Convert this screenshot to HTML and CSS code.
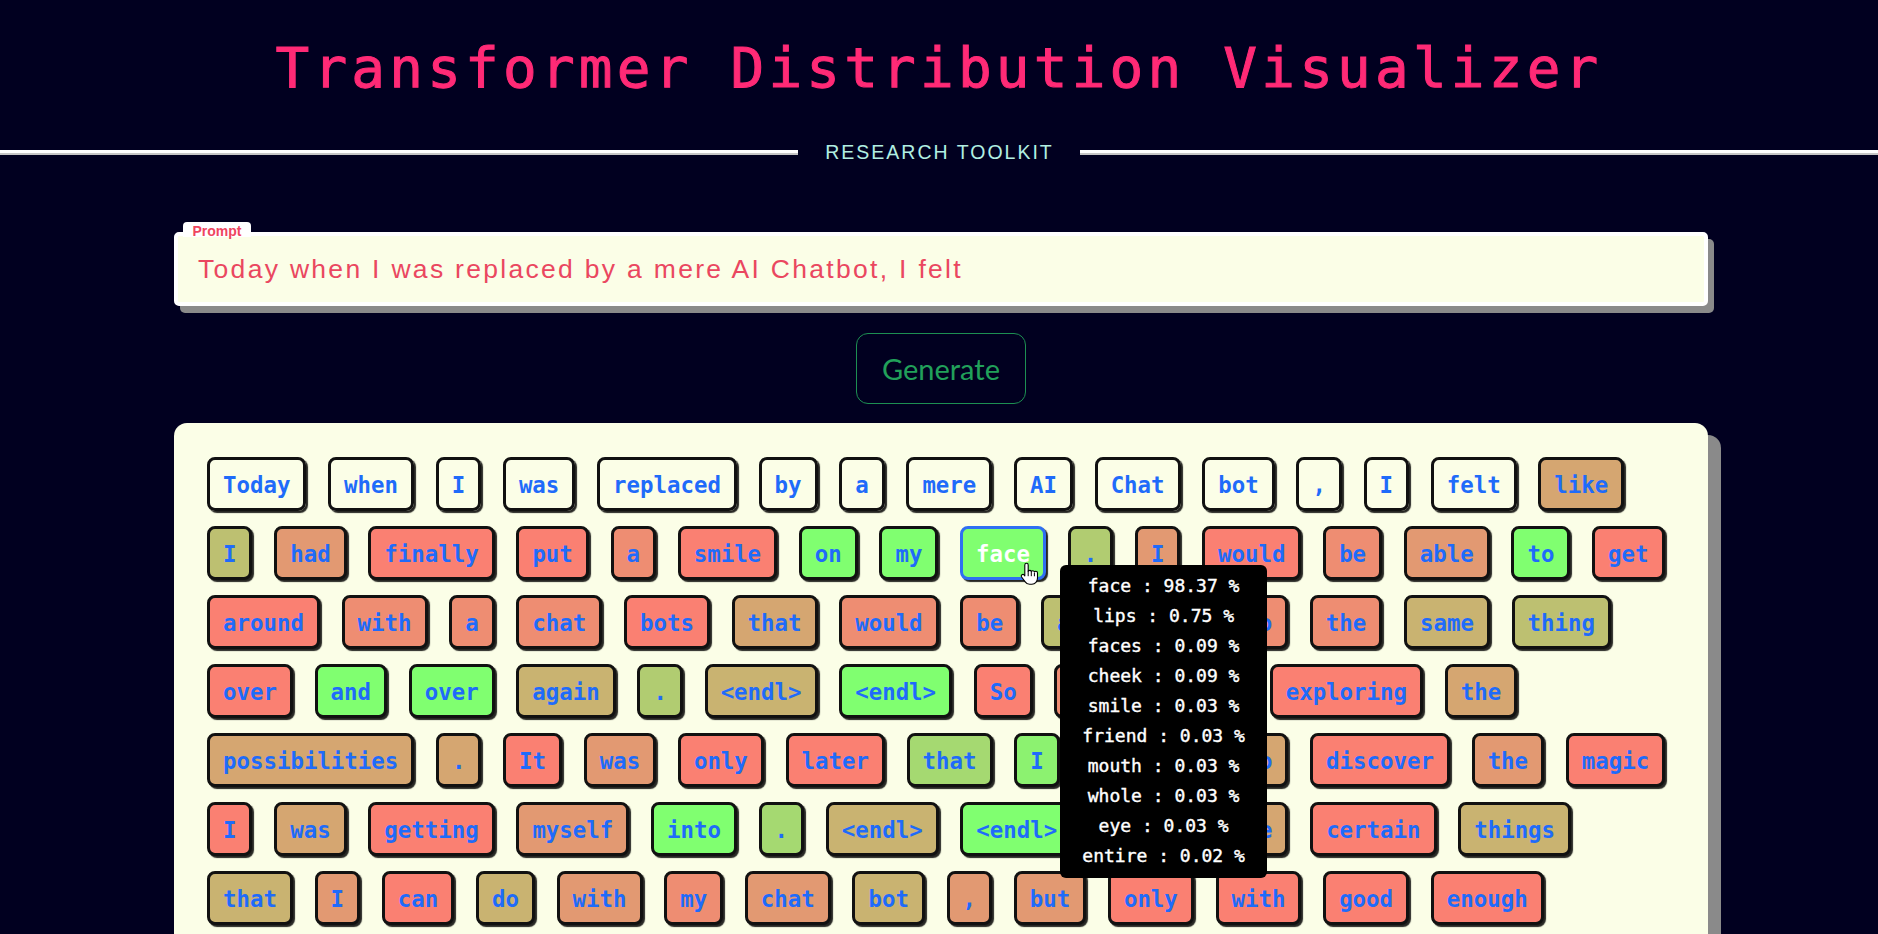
FILE: index.html
```html
<!DOCTYPE html>
<html lang="en">
<head>
<meta charset="utf-8">
<title>Transformer Distribution Visualizer</title>
<link rel="stylesheet" href="styles.css">
</head>
<body>
<header class="header">
  <h1 class="title">Transformer Distribution Visualizer</h1>
  <div class="divider">
    <span class="rule"></span>
    <span class="subtitle">RESEARCH TOOLKIT</span>
    <span class="rule"></span>
  </div>
</header>
<main class="main">
  <div class="prompt">
    <span class="prompt-label">Prompt</span>
    <div class="prompt-text">Today when I was replaced by a mere AI Chatbot, I felt</div>
  </div>
  <div class="actions">
    <button class="generate" type="button">Generate</button>
  </div>
  <section class="tokens">
    <span class="tok pr">Today</span>
    <span class="tok pr">when</span>
    <span class="tok pr">I</span>
    <span class="tok pr">was</span>
    <span class="tok pr">replaced</span>
    <span class="tok pr">by</span>
    <span class="tok pr">a</span>
    <span class="tok pr">mere</span>
    <span class="tok pr">AI</span>
    <span class="tok pr">Chat</span>
    <span class="tok pr">bot</span>
    <span class="tok pr">,</span>
    <span class="tok pr">I</span>
    <span class="tok pr">felt</span>
    <span class="tok l3">like</span>

    <span class="tok l5">I</span>
    <span class="tok l2">had</span>
    <span class="tok l0">finally</span>
    <span class="tok l0">put</span>
    <span class="tok l1">a</span>
    <span class="tok l0">smile</span>
    <span class="tok l10">on</span>
    <span class="tok l10">my</span>
    <span class="tok l10 active">face<svg class="cursor" width="20" height="24" viewBox="0 0 20 24"><path d="M6.5 1.2c1 0 1.7.7 1.7 1.7v6.3c.3-.5.9-.8 1.5-.8.8 0 1.4.5 1.6 1.1.3-.5.9-.8 1.5-.8.9 0 1.5.6 1.6 1.300.3-.4.8-.7 1.4-.7 1 0 1.7.8 1.7 1.8v5c0 3.4-2.3 6.2-5.6 6.2h-2.3c-2 0-3.3-1-4.4-2.5L1.6 15c-.6-.8-.4-1.8.4-2.3.7-.5 1.6-.3 2.1.3l.7.9V2.9c0-1 .7-1.7 1.7-1.7z" fill="#fff" stroke="#000" stroke-width="1.1" stroke-linejoin="round"/><path d="M8.2 9.2v4.6M11.3 10.4v3.4M14.4 11.1v2.8" fill="none" stroke="#000" stroke-width="1" stroke-linecap="round"/></svg><span class="tooltip">
        <span class="tip-line">face : 98.37 %</span>
        <span class="tip-line">lips : 0.75 %</span>
        <span class="tip-line">faces : 0.09 %</span>
        <span class="tip-line">cheek : 0.09 %</span>
        <span class="tip-line">smile : 0.03 %</span>
        <span class="tip-line">friend : 0.03 %</span>
        <span class="tip-line">mouth : 0.03 %</span>
        <span class="tip-line">whole : 0.03 %</span>
        <span class="tip-line">eye : 0.03 %</span>
        <span class="tip-line">entire : 0.02 %</span>
      </span></span>
    <span class="tok l6">.</span>
    <span class="tok l2">I</span>
    <span class="tok l0">would</span>
    <span class="tok l1">be</span>
    <span class="tok l2">able</span>
    <span class="tok l10">to</span>
    <span class="tok l0">get</span>

    <span class="tok l0">around</span>
    <span class="tok l1">with</span>
    <span class="tok l1">a</span>
    <span class="tok l1">chat</span>
    <span class="tok l0">bots</span>
    <span class="tok l3">that</span>
    <span class="tok l1">would</span>
    <span class="tok l1">be</span>
    <span class="tok l5">able</span>
    <span class="tok l2">to</span>
    <span class="tok l1">do</span>
    <span class="tok l1">the</span>
    <span class="tok l4">same</span>
    <span class="tok l5">thing</span>

    <span class="tok l0">over</span>
    <span class="tok l10">and</span>
    <span class="tok l10">over</span>
    <span class="tok l4">again</span>
    <span class="tok l6">.</span>
    <span class="tok l4">&lt;endl&gt;</span>
    <span class="tok l10">&lt;endl&gt;</span>
    <span class="tok l0">So</span>
    <span class="tok l1">I</span>
    <span class="tok l0">started</span>
    <span class="tok l0">exploring</span>
    <span class="tok l3">the</span>

    <span class="tok l3">possibilities</span>
    <span class="tok l3">.</span>
    <span class="tok l0">It</span>
    <span class="tok l2">was</span>
    <span class="tok l0">only</span>
    <span class="tok l0">later</span>
    <span class="tok l7">that</span>
    <span class="tok l9">I</span>
    <span class="tok l1">started</span>
    <span class="tok l3">to</span>
    <span class="tok l0">discover</span>
    <span class="tok l2">the</span>
    <span class="tok l0">magic</span>

    <span class="tok l0">I</span>
    <span class="tok l3">was</span>
    <span class="tok l0">getting</span>
    <span class="tok l2">myself</span>
    <span class="tok l10">into</span>
    <span class="tok l7">.</span>
    <span class="tok l4">&lt;endl&gt;</span>
    <span class="tok l10">&lt;endl&gt;</span>
    <span class="tok l1">There</span>
    <span class="tok l3">are</span>
    <span class="tok l0">certain</span>
    <span class="tok l4">things</span>

    <span class="tok l4">that</span>
    <span class="tok l2">I</span>
    <span class="tok l0">can</span>
    <span class="tok l4">do</span>
    <span class="tok l2">with</span>
    <span class="tok l1">my</span>
    <span class="tok l2">chat</span>
    <span class="tok l4">bot</span>
    <span class="tok l2">,</span>
    <span class="tok l2">but</span>
    <span class="tok l0">only</span>
    <span class="tok l0">with</span>
    <span class="tok l0">good</span>
    <span class="tok l0">enough</span>

    <span class="tok l5">&lt;endl&gt;</span>
    <span class="tok l10">&lt;endl&gt;</span>
    <span class="tok l2">Now</span>
    <span class="tok l0">I</span>
  </section>
</main>
</body>
</html>
```

FILE: styles.css
```css
* {
  box-sizing: border-box;
}

html, body {
  margin: 0;
  padding: 0;
}

body {
  background: #010020;
  font-family: "Liberation Sans", Arial, sans-serif;
  overflow: hidden;
  height: 934px;
}

.header {
  padding-top: 34px;
}

.title {
  margin: 0;
  text-align: center;
  font-family: "DejaVu Sans Mono", monospace;
  font-weight: normal;
  font-size: 56px;
  line-height: 67px;
  letter-spacing: 4.2px;
  color: #ff2a76;
  -webkit-text-stroke: 1px #ff2a76;
}

.divider {
  display: flex;
  align-items: center;
  margin-top: 40px;
  height: 22px;
}

.rule {
  flex: 1;
  height: 5px;
  background: #ffffff;
  border-bottom: 2px solid #c6c6c6;
}

.subtitle {
  margin: 0 26px 0 27px;
  font-family: "Liberation Sans", Arial, sans-serif;
  font-size: 19.5px;
  line-height: 22px;
  letter-spacing: 2px;
  color: #b2efe2;
}

.main {
  width: 1534px;
  margin-left: 174px;
}

.prompt {
  position: relative;
  margin-top: 69px;
  background: #fbfee7;
  border: 4px solid #ffffff;
  border-radius: 5px;
  box-shadow: 6px 7px 0 #8a8a8a;
  padding: 17px 20px;
}

.prompt-label {
  position: absolute;
  left: 5px;
  top: -14px;
  height: 15px;
  padding: 0 9.5px;
  background: #ffffff;
  border-radius: 4px 4px 0 0;
  font-family: "Liberation Sans", Arial, sans-serif;
  font-weight: bold;
  font-size: 14px;
  line-height: 18px;
  color: #ef4560;
}

.prompt-text {
  font-family: "Liberation Sans", Arial, sans-serif;
  font-size: 26.5px;
  line-height: 32px;
  letter-spacing: 2.3px;
  color: #ea4760;
}

.actions {
  display: flex;
  justify-content: center;
  margin-top: 27px;
}

.generate {
  height: 71px;
  padding: 0 25px;
  background: transparent;
  border: 1.5px solid #1d8f52;
  border-radius: 12px;
  font-family: Lato, "Open Sans", sans-serif;
  font-size: 29px;
  line-height: 1;
  color: #21a05a;
}

.tokens {
  margin-top: 19px;
  background: #fbfee7;
  border-radius: 13px;
  box-shadow: 13px 12px 0 #8a8a8a;
  padding: 33.5px 37px 34px 33px;
  display: flex;
  flex-wrap: wrap;
  align-content: flex-start;
  gap: 15px 21.7px;
}

.tok {
  display: block;
  white-space: pre;
  font-family: "DejaVu Sans Mono", monospace;
  font-weight: bold;
  font-size: 22.4px;
  line-height: 26px;
  color: #1f6bfa;
  border: 3px solid #111111;
  border-radius: 8px;
  padding: 12px 13px 10px;
  box-shadow: 2px 2px 1px rgba(0, 0, 0, 0.85);
}

.tok.pr { background: transparent; }
.tok.l0 { background: #fa8072; }
.tok.l1 { background: #ee8d72; }
.tok.l2 { background: #e29972; }
.tok.l3 { background: #d5a671; }
.tok.l4 { background: #c9b371; }
.tok.l5 { background: #bdc071; }
.tok.l6 { background: #b1cc71; }
.tok.l7 { background: #a5d971; }
.tok.l8 { background: #98e670; }
.tok.l9 { background: #8cf270; }
.tok.l10 { background: #80ff70; }

.tok.active {
  position: relative;
  color: #ffffff;
  border-color: #2f6ff2;
}

.cursor {
  position: absolute;
  left: 57px;
  top: 33px;
  z-index: 6;
}

.tooltip {
  position: absolute;
  left: 97px;
  top: 36px;
  z-index: 5;
  display: flex;
  flex-direction: column;
  width: 207px;
  padding: 6.5px 0;
  background: #000000;
  border-radius: 6px;
  font-family: "DejaVu Sans Mono", monospace;
  font-weight: normal;
  font-size: 18px;
  line-height: 30px;
  color: #ffffff;
  -webkit-text-stroke: 0.4px #ffffff;
  text-align: center;
  white-space: nowrap;
}

.tip-line {
  display: block;
}
```
